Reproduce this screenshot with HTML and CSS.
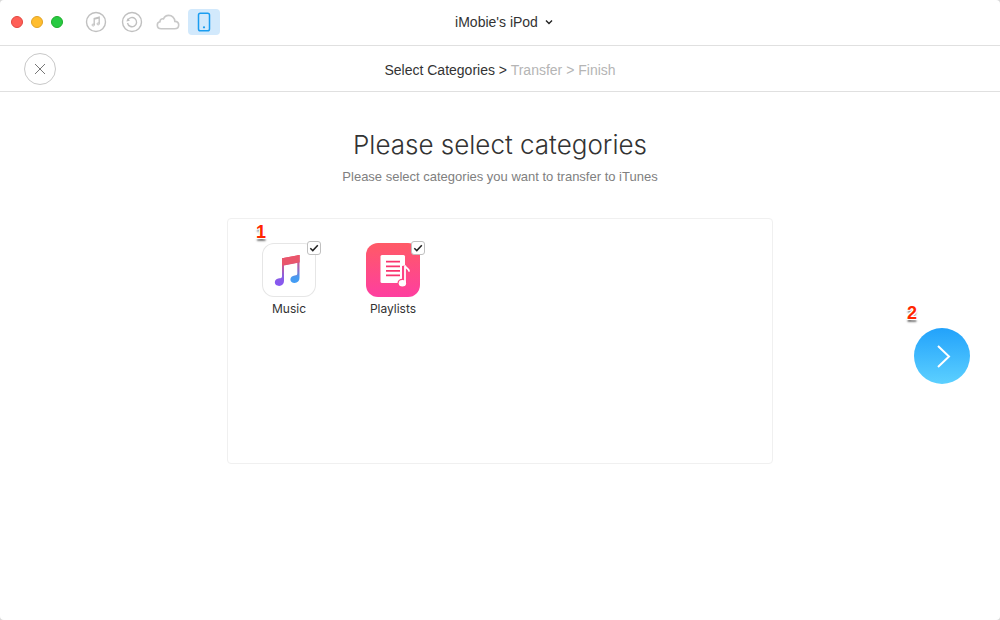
FILE: index.html
```
<!DOCTYPE html>
<html lang="en">
<head>
    <meta charset="UTF-8">
    <meta name="viewport" content="width=device-width, initial-scale=1.0">
    <title>iMobie's iPod</title>
    <link rel="stylesheet" href="styles.css">
</head>
<body>
    <div class="window">
        <header class="titlebar">
            <div class="left">
                <div class="lights">
                    <button class="light red" aria-label="Close window"></button>
                    <button class="light yellow" aria-label="Minimize"></button>
                    <button class="light green" aria-label="Zoom"></button>
                </div>
                <nav class="tabs">
                    <button class="tab" aria-label="iTunes library">
                        <svg width="22" height="22" viewBox="0 0 22 22" fill="none" stroke="#c0c0c0">
                            <circle cx="11" cy="11" r="9.5" stroke-width="1.4"/>
                            <path d="M9.2 14V7.5l5-1.3v6.6M9.2 8.2l5-1.3" stroke-width="1.3"/>
                            <ellipse cx="8.2" cy="14" rx="1.2" ry="1"/>
                            <ellipse cx="13.2" cy="12.9" rx="1.2" ry="1"/>
                        </svg>
                    </button>
                    <button class="tab" aria-label="Backups">
                        <svg width="22" height="22" viewBox="0 0 22 22" fill="none" stroke="#c0c0c0">
                            <circle cx="11" cy="11" r="9.5" stroke-width="1.4"/>
                            <path d="M6.8 9.2a4.6 4.6 0 1 1-.3 2.8" stroke-width="1.4"/>
                            <path d="M5.4 10.4l3.6-.6-2.6-2.6z" fill="#c0c0c0" stroke="none"/>
                        </svg>
                    </button>
                    <button class="tab" aria-label="iCloud">
                        <svg width="24" height="16" viewBox="0 0 24 16" fill="none" stroke="#c8c8c8" stroke-width="1.6">
                            <path d="M5.2 14.8h13.5c2.400 0 4-1.600 4-3.700 0-2.200-1.700-3.700-3.800-3.700C18.800 3.900 16 1.400 12.700 1.400c-2.500 0-4.300 1.300-5.200 3.500-2-.5-3.600.8-3.500 2.900-1.700.3-2.700 1.700-2.700 3.300 0 2.200 1.600 3.700 3.900 3.700z"/>
                        </svg>
                    </button>
                    <button class="tab active" aria-label="Device">
                        <svg width="14" height="20" viewBox="0 0 14 20" fill="none" stroke="#1a9df0" stroke-width="1.5">
                            <rect x="1.5" y="1.2" width="11" height="17.6" rx="1.8"/>
                            <circle cx="7" cy="15.3" r="1.1" fill="#1a9df0" stroke="none"/>
                        </svg>
                    </button>
                </nav>
            </div>
            <button class="device">
                iMobie's iPod
                <svg width="8" height="6" viewBox="0 0 8 6" fill="none" stroke="#222" stroke-width="1.4">
                    <path d="M1 1.500l3 3 3-3"/>
                </svg>
            </button>
        </header>

        <div class="steps">
            <button class="cancel" aria-label="Cancel">
                <svg width="12" height="12" viewBox="0 0 12 12" stroke="#777">
                    <path d="M1 1l10 10M11 1L1 11"/>
                </svg>
            </button>
            <p class="path">Select Categories &gt; <span>Transfer &gt; Finish</span></p>
        </div>

        <main>
            <section class="content">
                <h1>Please select categories</h1>
                <p class="hint">Please select categories you want to transfer to iTunes</p>
                <div class="categories">
                    <span class="mark mark-one">1</span>
                    <label class="category">
                        <span class="icon music">
                            <svg width="54" height="54" viewBox="0 0 54 54">
                                <defs>
                                    <linearGradient id="note" x1="0.6" y1="0" x2="0.5" y2="1">
                                        <stop offset="0" stop-color="#fb4f5f"/>
                                        <stop offset="0.4" stop-color="#c45a9c"/>
                                        <stop offset="0.7" stop-color="#8a5fe0"/>
                                        <stop offset="1" stop-color="#8757f2"/>
                                    </linearGradient>
                                    <linearGradient id="stem" x1="0" y1="0" x2="0" y2="1">
                                        <stop offset="0" stop-color="#ec5068"/>
                                        <stop offset="0.5" stop-color="#9b66c0"/>
                                        <stop offset="0.8" stop-color="#479af0"/>
                                        <stop offset="1" stop-color="#429df5"/>
                                    </linearGradient>
                                </defs>
                                <path fill="url(#note)" d="M20 15.200L37.500 12v7.600L22 22.600V38c0 3-2 4.900-4.900 4.900-2.500 0-4.300-1.400-4.300-3.600 0-2.400 1.900-3.700 4.400-4 2-.2 2.800-.6 2.800-2.100z"/>
                                <path fill="url(#stem)" d="M35.300 12.400l2.200-.4v23c0 3-2 4.900-4.900 4.900-2.500 0-4.200-1.400-4.200-3.500 0-2.400 1.800-3.700 4.300-4 1.900-.2 2.600-.6 2.600-2z"/>
                                <path fill="#e9556c" d="M20 15.200L37.500 12v7.200L20 22.500z"/>
                            </svg>
                        </span>
                        <input type="checkbox" checked>
                        <span class="name">Music</span>
                    </label>
                    <label class="category">
                        <span class="icon playlists">
                            <svg width="54" height="54" viewBox="0 0 54 54" fill="none">
                                <rect x="14.500" y="12" width="24.500" height="28" rx="1.500" fill="#fff"/>
                                <path d="M20 18.700h14M20 23.300h14M20 27.800h14M20 32.400h14" stroke="#f9346f" stroke-width="1.800"/>
                                <path d="M38 39V23c1 2.400 4.200 2.300 4.500 5.800" stroke="#fd4483" stroke-width="4"/>
                                <ellipse cx="36.300" cy="40" rx="4.800" ry="4.200" fill="#fd4483"/>
                                <path d="M39 40V22.500c.8 3.200 3.800 2.400 4.200 6.100" stroke="#fff" stroke-width="1.800"/>
                                <ellipse cx="36.400" cy="40.300" rx="3.700" ry="3.300" fill="#fff"/>
                            </svg>
                        </span>
                        <input type="checkbox" checked>
                        <span class="name">Playlists</span>
                    </label>
                </div>
            </section>
            <div class="next-wrap">
                <span class="mark mark-two">2</span>
                <button class="next" aria-label="Next">
                    <svg width="16" height="24" viewBox="0 0 16 24" fill="none" stroke="#fff" stroke-width="2">
                        <path d="M2 2l11 10.500L2 23"/>
                    </svg>
                </button>
            </div>
        </main>
    </div>
</body>
</html>
```

FILE: styles.css
```
* {
    box-sizing: border-box;
}

body {
    margin: 0;
    background-color: #d8d8d8;
    font-family: "Liberation Sans", Helvetica, Arial, sans-serif;
    font-size: 14px;
    color: #333;
}

button {
    padding: 0;
    border: none;
    background: none;
    font: inherit;
    color: inherit;
    cursor: pointer;
}

svg {
    display: block;
}

.window {
    display: flex;
    flex-direction: column;
    min-height: 100vh;
    background-color: #fff;
    border-radius: 4px;
}

.titlebar,
.steps {
    display: grid;
    grid-template-columns: 1fr auto 1fr;
    align-items: center;
    height: 46px;
    border-bottom: 1px solid #e0e0e0;
}

.titlebar {
    padding-bottom: 1px;
}

.left {
    display: flex;
    align-items: center;
    gap: 17px;
    padding-left: 11px;
}

.lights {
    display: flex;
    gap: 8px;
}

.light {
    width: 12px;
    height: 12px;
    border: 1px solid #e2463f;
    border-radius: 50%;
    background-color: #ff5f57;
}

.light.yellow {
    border-color: #e1a325;
    background-color: #ffbd2e;
}

.light.green {
    border-color: #1dad2b;
    background-color: #28ca42;
}

.tabs {
    display: flex;
    gap: 4px;
}

.tab {
    display: flex;
    align-items: center;
    justify-content: center;
    width: 32px;
    height: 26px;
    border-radius: 4px;
}

.tab.active {
    background-color: #d2e9fc;
}

.device {
    display: flex;
    align-items: center;
    gap: 7px;
    padding-left: 8px;
}

.cancel {
    display: flex;
    align-items: center;
    justify-content: center;
    width: 32px;
    height: 32px;
    margin-left: 24px;
    border: 1px solid #c8c8c8;
    border-radius: 50%;
}

.path {
    margin: 2px 0 0;
}

.path span {
    color: #b5b5b5;
}

main {
    flex: 1;
    display: grid;
    grid-template-columns: 1fr minmax(0, 546px) 1fr;
}

.content {
    grid-column: 2;
    padding-top: 36px;
    text-align: center;
}

h1 {
    margin: 0;
    font-family: Inter, "Liberation Sans", sans-serif;
    font-size: 26px;
    font-weight: 300;
    line-height: 34px;
}

.hint {
    margin: 6px 0 0;
    font-size: 13px;
    line-height: 18px;
    color: #808080;
}

.categories {
    position: relative;
    display: flex;
    flex-wrap: wrap;
    align-items: flex-start;
    gap: 24px 50px;
    min-height: 246px;
    margin-top: 32px;
    padding: 24px 34px;
    border: 1px solid #f0f0f0;
    border-radius: 4px;
}

.category {
    position: relative;
    width: 54px;
    cursor: pointer;
}

.icon {
    display: block;
    overflow: hidden;
    height: 54px;
    border-radius: 12px;
}

.music {
    box-shadow: inset 0 0 0 1px #e6e6e6;
}

.playlists {
    background: linear-gradient(#ff5a66, #fe3ea0);
}

.category input {
    position: absolute;
    top: -2px;
    right: -5px;
    width: 14px;
    height: 14px;
    margin: 0;
    appearance: none;
    border: 1px solid #c0c0c0;
    border-radius: 3px;
    background-color: #fff;
}

.category input:checked {
    background-image: url("data:image/svg+xml,%3Csvg xmlns='http://www.w3.org/2000/svg' viewBox='0 0 12 12' fill='none' stroke='%23222' stroke-width='1.5'%3E%3Cpath d='M2.300 6.200l2.500 2.400L9.800 3.200'/%3E%3C/svg%3E");
}

.name {
    display: flex;
    justify-content: center;
    margin-top: 4px;
    font-family: Inter, "Liberation Sans", sans-serif;
    font-size: 12px;
    line-height: 16px;
}

/* numbered callouts */
.mark {
    position: absolute;
    font-size: 18px;
    font-weight: bold;
    line-height: 20px;
    color: #ff2600;
    text-shadow: 1px 1px #fff, -1px 1px #fff, 1px -1px #fff, -1px -1px #fff, 0 3px 2px #777;
}

.mark-one {
    top: 3px;
    left: 28px;
}

.mark-two {
    top: -25px;
    left: -7px;
}

.next-wrap {
    position: relative;
    align-self: center;
    justify-self: end;
    margin-right: 30px;
}

.next {
    display: flex;
    align-items: center;
    justify-content: center;
    width: 56px;
    height: 56px;
    padding-left: 4px;
    border-radius: 50%;
    background: linear-gradient(#22a2fb, #5cd0ff);
}
```
